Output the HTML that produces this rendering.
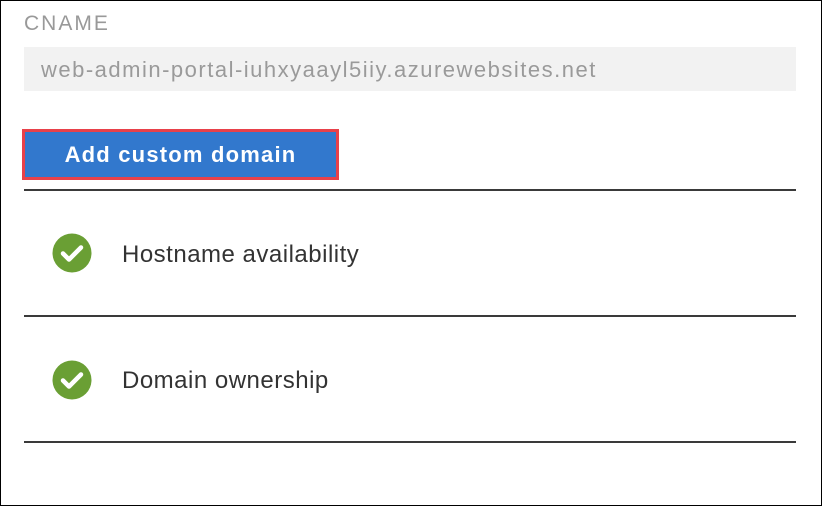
<!DOCTYPE html>
<html><head><style>
body{margin:0;width:822px;height:506px;overflow:hidden;background:#fff;font-family:"Liberation Sans",sans-serif;}
.frame{position:absolute;left:0;top:0;width:820px;height:504px;border:1px solid #000;}
.abs{position:absolute;white-space:nowrap;}
.line{position:absolute;left:24px;width:772px;height:2px;background:#3a3a3a;}
.row{position:absolute;left:122px;font-size:24px;color:#333;letter-spacing:0.5px;}
</style></head><body>
<div class="frame"></div>
<div class="abs" style="left:24px;top:12px;font-size:21px;color:#999;letter-spacing:2px;">CNAME</div>
<div class="abs" style="left:24px;top:47px;width:772px;height:44px;background:#f2f2f2;"></div>
<div class="abs" style="left:41px;top:57px;font-size:22px;color:#9a9a9a;letter-spacing:1.5px;">web-admin-portal-iuhxyaayl5iiy.azurewebsites.net</div>
<div class="abs" style="left:22px;top:129px;width:311px;height:45px;border:3px solid #e8414a;background:#3278cd;color:#fff;font-weight:bold;font-size:22px;letter-spacing:1.2px;text-align:center;line-height:45px;">Add custom domain</div>
<div class="line" style="top:189px;"></div>
<svg class="abs" style="left:52px;top:233px" width="40" height="40" viewBox="0 0 40 40"><circle cx="20" cy="20" r="19.5" fill="#6a9f34"/><path d="M11 20.5l6 6 12-12" stroke="#fff" stroke-width="4.5" fill="none" stroke-linecap="round" stroke-linejoin="round"/></svg>
<div class="row" style="top:241px;">Hostname availability</div>
<div class="line" style="top:315px;"></div>
<svg class="abs" style="left:52px;top:360px" width="40" height="40" viewBox="0 0 40 40"><circle cx="20" cy="20" r="19.5" fill="#6a9f34"/><path d="M11 20.5l6 6 12-12" stroke="#fff" stroke-width="4.5" fill="none" stroke-linecap="round" stroke-linejoin="round"/></svg>
<div class="row" style="top:367px;">Domain ownership</div>
<div class="line" style="top:441px;"></div>
</body></html>
